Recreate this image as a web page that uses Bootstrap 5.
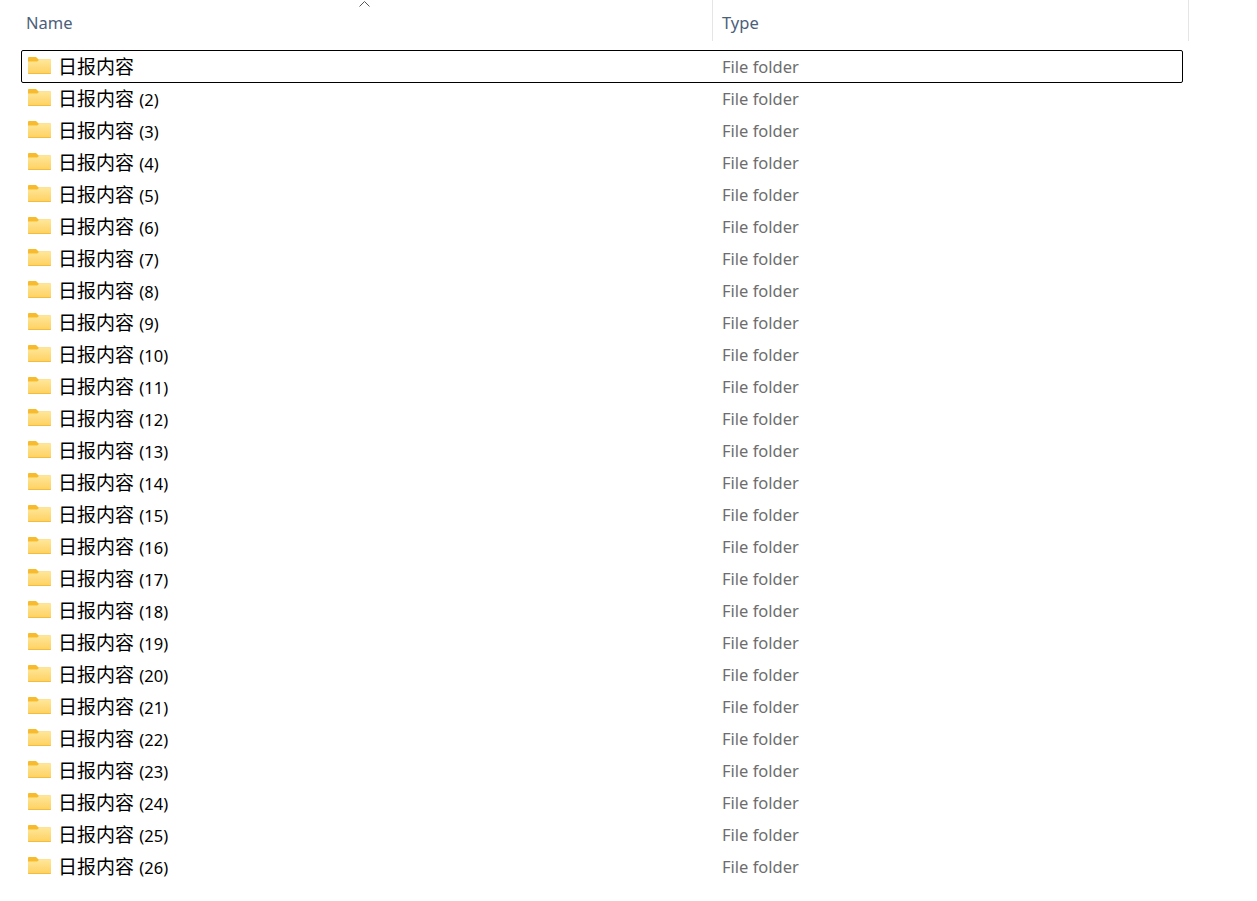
<!DOCTYPE html>
<html lang="en">
<head>
  <meta charset="UTF-8">
  <title>File list</title>
  <meta name="viewport" content="width=device-width, initial-scale=1" />
  <link href="https://cdn.jsdelivr.net/npm/bootstrap@5.3.3/dist/css/bootstrap.min.css" rel="stylesheet">
  <style>
    body { background: #fff; font-family: "Noto Sans", "Noto Sans CJK SC", sans-serif; font-size: 16.5px; overflow: hidden; }
    .head-bar { width: 1189px; height: 41px; position: relative; }
    .head-name { width: 713px; padding-left: 26px; border-right: 1px solid #e5e5e5; }
    .head-type { width: 476px; padding-left: 9px; border-right: 1px solid #e5e5e5; }
    .head-cell { color: #4c607a; font-size: 16.5px; line-height: 45px; height: 41px; }
    .sort-mark { position: absolute; left: 359px; top: 0; }
    .file-list { margin: 9px 0 0 21px; width: 1162px; }
    .file-row { height: 33px; margin-bottom: -1px; border: 1px solid transparent; border-radius: 2px; }
    .file-row.picked { border-color: #000; }
    .file-name { width: 691px; padding-left: 6px; color: #000; gap: 7px; white-space: nowrap; }
    .file-type { color: #6d6d6d; padding-left: 9px; padding-top: 2px; }
    .cjk-name { font-family: "Noto Sans CJK SC", sans-serif; font-size: 19px; }
    .file-num { margin-left: 1px; }
    .folder-ico { width: 23px; height: 17px; flex: none; margin-top: -2px; }
  </style>
</head>
<body>
  <div class="head-bar d-flex">
    <div class="head-cell head-name">Name</div>
    <div class="head-cell head-type">Type</div>
    <svg class="sort-mark" width="12" height="7" viewBox="0 0 12 7"><path d="M.5 6.5 5.5 1.5l5 5" fill="none" stroke="#555" stroke-width="1"/></svg>
  </div>
  <div class="file-list" id="fileList"></div>

  <svg width="0" height="0" class="position-absolute">
    <defs>
      <linearGradient id="folderFill" x1="0" y1="0" x2="0" y2="1">
        <stop offset="0" stop-color="#ffe79a"/>
        <stop offset="1" stop-color="#fdd160"/>
      </linearGradient>
      <symbol id="folderIco" viewBox="0 0 23 17">
        <path d="M0 1.2C0 .5.5 0 1.2 0H8l2.6 2.4H22c.6 0 1 .4 1 1V6H0Z" fill="#f9bb2e"/>
        <path d="M0 16V4.4h9.2l2.4-2H22c.6 0 1 .4 1 1V16c0 .6-.4 1-1 1H1c-.6 0-1-.4-1-1Z" fill="url(#folderFill)"/>
        <path d="M0 16.2h23c0 .5-.4.8-1 .8H1c-.6 0-1-.3-1-.8Z" fill="#f2b233"/>
      </symbol>
    </defs>
  </svg>

  <script>
    const list = document.getElementById("fileList");
    for (let i = 1; i <= 26; i++) {
      const suffix = i === 1 ? "" : `<span class="file-num"> (${i})</span>`;
      list.innerHTML += `<div class="file-row d-flex align-items-center ${i === 1 ? "picked" : ""}">
        <div class="file-name d-flex align-items-center">
          <svg class="folder-ico"><use href="#folderIco"/></svg>
          <span><span class="cjk-name">日报内容</span>${suffix}</span>
        </div>
        <div class="file-type">File folder</div>
      </div>`;
    }
  </script>
  <script src="https://cdn.jsdelivr.net/npm/bootstrap@5.3.3/dist/js/bootstrap.bundle.min.js"></script>
</body>
</html>
